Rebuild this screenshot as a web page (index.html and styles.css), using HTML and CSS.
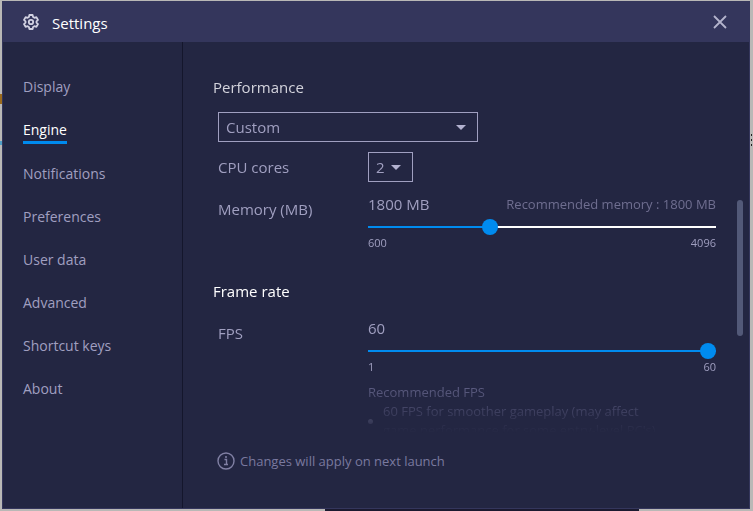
FILE: index.html
```html
<!DOCTYPE html>
<html lang="en">
<head>
    <meta charset="UTF-8">
    <meta name="viewport" content="width=device-width, initial-scale=1.0">
    <title>Settings</title>
    <link rel="stylesheet" href="styles.css">
</head>
<body>
    <div class="window">
        <!-- Title bar -->
        <header class="title-bar">
            <svg class="gear" viewBox="0 0 16 16" aria-hidden="true">
                <path d="M6.4 1h3.2l.5 2 1.3.8 2-.6 1.6 2.7-1.5 1.4v1.4l1.5 1.4-1.6 2.7-2-.6-1.3.8-.5 2H6.4l-.5-2-1.3-.8-2 .6L1 10.1l1.5-1.4V7.3L1 5.9l1.6-2.7 2 .6L5.9 3z"/>
                <circle cx="8" cy="8" r="2.2"/>
            </svg>
            <h1>Settings</h1>
            <button class="close" type="button" aria-label="Close">
                <svg viewBox="0 0 14 14"><path d="M1 1l12 12M13 1L1 13"/></svg>
            </button>
        </header>

        <div class="main">
            <!-- Sidebar -->
            <nav class="sidebar">
                <a href="#display">Display</a>
                <a href="#engine" class="active">Engine</a>
                <a href="#notifications">Notifications</a>
                <a href="#preferences">Preferences</a>
                <a href="#user-data">User data</a>
                <a href="#advanced">Advanced</a>
                <a href="#shortcut-keys">Shortcut keys</a>
                <a href="#about">About</a>
            </nav>

            <div class="content">
                <div class="scroll-area">
                    <section>
                        <h2 class="dim" id="performance">Performance</h2>
                        <div class="rows">
                            <div class="select select-wide">
                                <select aria-labelledby="performance">
                                    <option>Custom</option>
                                </select>
                            </div>
                            <div class="row row-cpu">
                                <label for="cpu">CPU cores</label>
                                <div class="select select-small">
                                    <select id="cpu">
                                        <option>2</option>
                                    </select>
                                </div>
                            </div>
                            <div class="row row-slider">
                                <label for="memory">Memory (MB)</label>
                                <div>
                                    <div class="value"><span>1800 MB</span><span class="hint">Recommended memory : 1800 MB</span></div>
                                    <input type="range" id="memory" min="600" max="4096" value="1800" style="--fill: 35%">
                                    <div class="scale"><span>600</span><span>4096</span></div>
                                </div>
                            </div>
                        </div>
                    </section>

                    <section>
                        <h2>Frame rate</h2>
                        <div class="rows">
                            <div class="row row-slider">
                                <label for="fps">FPS</label>
                                <div>
                                    <div class="value"><span>60</span></div>
                                    <input type="range" id="fps" min="1" max="60" value="60" style="--fill: 100%">
                                    <div class="scale"><span>1</span><span>60</span></div>
                                    <div class="recommended">
                                        <p>Recommended FPS</p>
                                        <ul>
                                            <li>60 FPS for smoother gameplay (may affect game performance for some entry-level PC's)</li>
                                        </ul>
                                    </div>
                                </div>
                            </div>
                        </div>
                    </section>
                </div>

                <footer class="notice">
                    <svg viewBox="0 0 18 18" aria-hidden="true">
                        <circle cx="9" cy="9" r="8"/>
                        <path d="M7.5 7.5h2v5M7 12.5h4M8 5h2"/>
                    </svg>
                    <span>Changes will apply on next launch</span>
                </footer>
                <div class="scroll-thumb"></div>
            </div>
        </div>
    </div>
</body>
</html>
```
FILE: styles.css
```css
* {
    box-sizing: border-box;
}
body {
    font-family: "Segoe UI", "Open Sans", "Noto Sans", sans-serif;
    font-size: 15px;
    line-height: 20px;
    margin: 0;
    height: 100vh;
    padding: 1px 3px 2px 2px;
    color: #a09fc0;
    /* Desktop showing around the window */
    background:
        linear-gradient(#1b1a30, #1b1a30) 325px 100% / 314px 2px no-repeat,
        linear-gradient(#9b6a1c, #9b6a1c) 0 94px / 2px 10px no-repeat,
        linear-gradient(#4f9fc6, #4f9fc6) 0 141px / 2px 4px no-repeat,
        repeating-linear-gradient(#222 0 2px, transparent 2px 5px) 751px 134px / 1px 13px no-repeat,
        #b9b8b6;
}
h1, h2, p, ul {
    margin: 0;
    padding: 0;
    font-size: inherit;
    font-weight: normal;
}
.window {
    display: flex;
    flex-direction: column;
    height: 100%;
    background-color: #232642;
    border: 1px solid #34365c;
    border-top: none;
}
/* Title bar */
.title-bar {
    display: flex;
    align-items: center;
    height: 41px;
    flex-shrink: 0;
    padding: 0 22px 0 20px;
    background-color: #34365c;
    color: #fff;
}
.title-bar h1 {
    flex: 1;
    margin-left: 13px;
    padding-top: 2px;
}
.gear {
    width: 16px;
    height: 16px;
    fill: none;
    stroke: #d2d2e2;
    stroke-width: 1.8;
    stroke-linejoin: round;
}
.close {
    display: flex;
    padding: 0;
    border: none;
    background: none;
    cursor: pointer;
}
.close svg {
    width: 14px;
    height: 14px;
    fill: none;
    stroke: #b4b4cc;
    stroke-width: 1.8;
}
.main {
    display: flex;
    flex: 1;
    min-height: 0;
}
/* Sidebar */
.sidebar {
    display: flex;
    flex-direction: column;
    align-items: flex-start;
    gap: 18px;
    width: 180px;
    flex-shrink: 0;
    padding: 34px 20px;
    border-right: 1px solid #14162c;
    font-size: 14px;
}
.sidebar a {
    color: #a09fc0;
    text-decoration: none;
    line-height: 22px;
    border-bottom: 3px solid transparent;
}
.sidebar a.active {
    color: #fff;
    border-color: #008bef;
    margin-bottom: 1px;
}
/* Settings content */
.content {
    position: relative;
    display: flex;
    flex-direction: column;
    flex: 1;
    min-width: 0;
    padding: 0 33px 0 30px;
}
.scroll-area {
    flex: 1;
    min-height: 0;
    overflow: hidden;
    padding-top: 35px;
    /* Fade out at the bottom */
    mask-image: linear-gradient(to top, transparent, #000 64px);
}
.scroll-thumb {
    position: absolute;
    top: 34%;
    right: 6px;
    width: 6px;
    height: 29%;
    border-radius: 3px;
    background-color: #525978;
}
h2 {
    color: #fff;
}
h2.dim {
    color: #d3d3dc;
}
section + section {
    margin-top: 30px;
}
.rows {
    padding: 15px 0 0 5px;
}
.row {
    display: grid;
    grid-template-columns: 150px 1fr;
}
.row-cpu {
    align-items: center;
    margin: 10px 0 12px;
}
.row-slider label {
    padding-top: 5px;
}
section + section .rows {
    padding-top: 17px;
}
/* Drop-downs */
.select {
    position: relative;
}
.select-wide {
    width: 260px;
}
.select-small {
    width: 45px;
}
.select select {
    appearance: none;
    display: block;
    width: 100%;
    height: 30px;
    padding: 0 7px;
    border: 1px solid #a09fc0;
    border-radius: 0;
    background: none;
    color: inherit;
    font: inherit;
}
.select::after {
    content: "";
    position: absolute;
    top: 13px;
    right: 12px;
    border: 5px solid transparent;
    border-top-color: #b3b2d0;
    border-bottom: none;
    pointer-events: none;
}
/* Sliders */
.value, .scale {
    display: flex;
    justify-content: space-between;
}
.hint {
    font-size: 13px;
    color: #6f6e90;
}
input[type="range"] {
    appearance: none;
    display: block;
    width: 100%;
    height: 16px;
    margin: 5px 0 0;
    background: linear-gradient(to right, #008bef var(--fill), #fff var(--fill)) center / 100% 2px no-repeat;
}
input[type="range"]::-webkit-slider-thumb {
    appearance: none;
    width: 16px;
    height: 16px;
    border-radius: 50%;
    background-color: #008bef;
}
.scale {
    font-size: 11px;
    line-height: 16px;
}
.recommended {
    width: 300px;
    margin-top: 8px;
    font-size: 13px;
    line-height: 19px;
    color: #73729a;
}
.recommended ul {
    list-style: none;
}
.recommended li {
    display: flex;
    align-items: center;
    gap: 10px;
}
.recommended li::before {
    content: "";
    flex-shrink: 0;
    width: 5px;
    height: 5px;
    border-radius: 50%;
    background-color: #a09fc0;
}
/* Notice under the settings */
.notice {
    display: flex;
    align-items: center;
    gap: 5px;
    padding: 18px 0 37px 4px;
    font-size: 13px;
    color: #7a799f;
}
.notice svg {
    width: 18px;
    height: 18px;
    fill: none;
    stroke: #8180a4;
    stroke-width: 1.4;
}
```
